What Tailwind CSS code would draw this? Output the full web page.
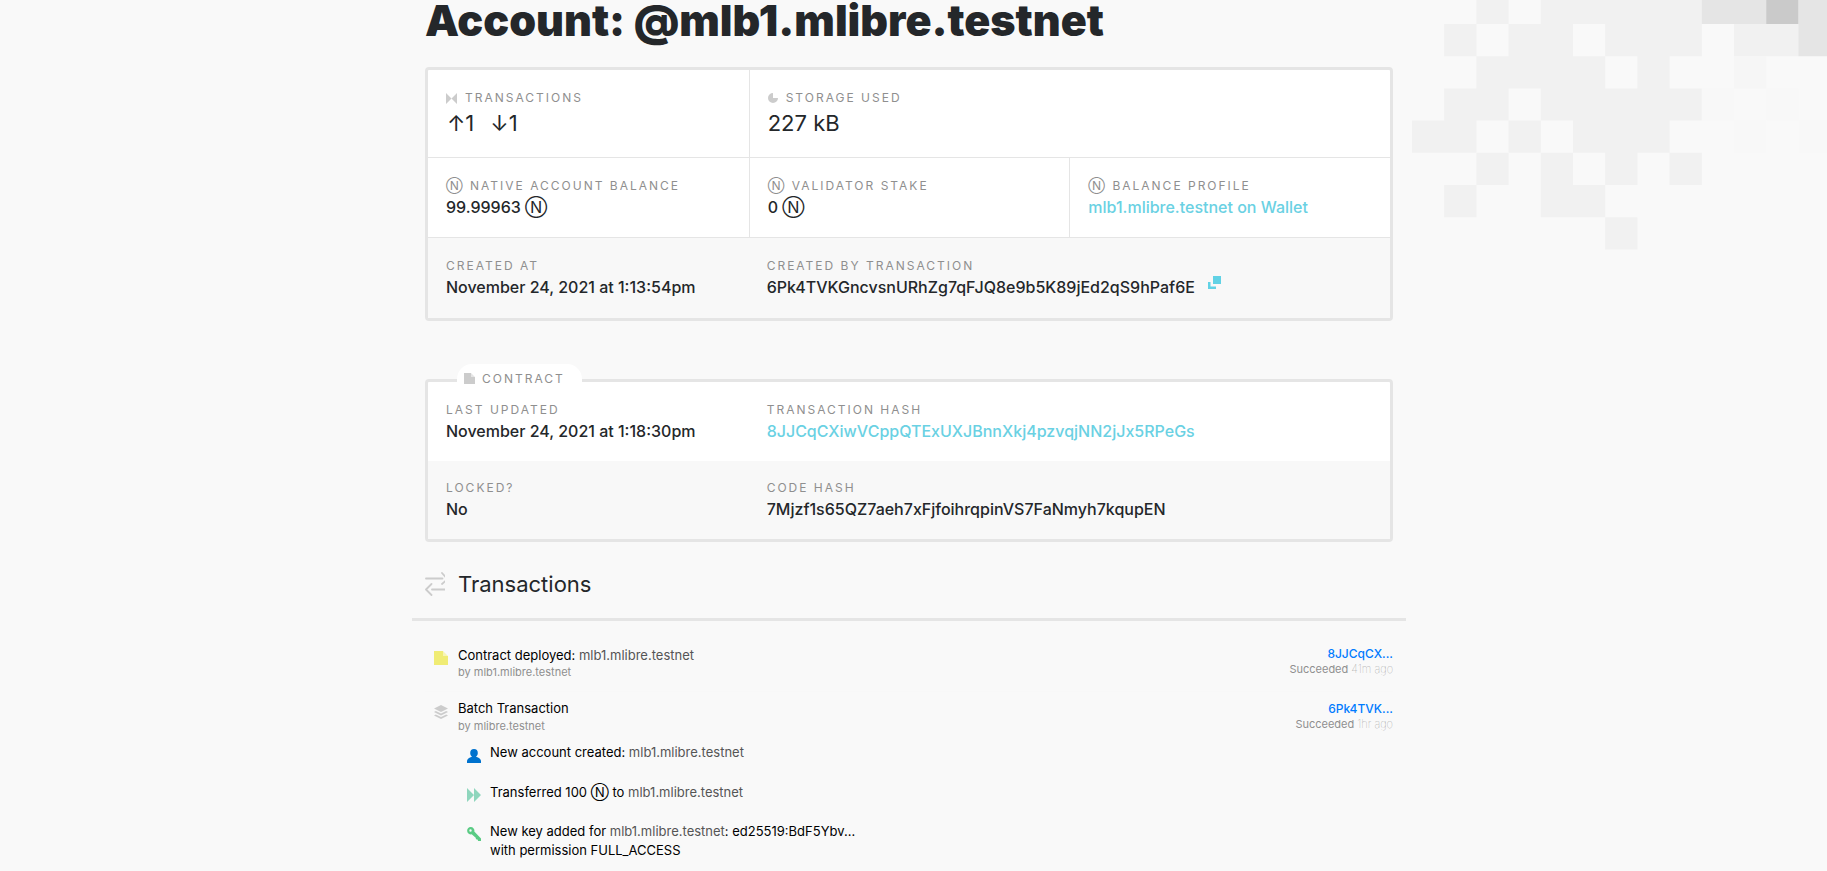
<!DOCTYPE html>
<html lang="en">
<head>
<meta charset="utf-8">
<title>Account: @mlb1.mlibre.testnet</title>
<meta name="viewport" content="width=device-width, initial-scale=1">
<script src="https://cdn.jsdelivr.net/npm/@tailwindcss/browser@4"></script>
</head>
<body class="relative min-h-screen overflow-x-hidden bg-[#f9f9f9] pr-[9px] font-['Inter',sans-serif] text-base font-medium text-[#24272a]">

<!-- Pixel pattern in the page corner -->
<svg class="absolute top-0 right-0 -z-0" width="415" height="250" viewBox="0 0 415 250" aria-hidden="true">
  <g transform="translate(0 -8.2) scale(32.2)">
    <path fill="#f1f1f1" d="M2 0h1v1h-1zM4 0h5v2h-3v-1h-2zM1 1h1v1h-1zM3 1h2v1h1v1h-4v-1h1zM7 2h1v1h-1zM1 3h2v1h-1v1h-2v-1h1zM4 3h5v1h-1v1h-3v-1h-1zM3 4h1v1h-1zM2 5h1v1h-1zM4 5h1v1h1v1h-2zM6 5h1v1h-1zM8 5h1v1h-1zM1 6h1v1h-1zM6 7h1v1h-1zM10 1h2v1h-2z"/>
    <path fill="#e5e5e5" d="M9 0h2v1h-2zM12 0h1v2h-1z"/>
    <path fill="#cacaca" d="M11 0h1v1h-1z"/>
    <path fill="#f6f6f6" d="M10 2h1v1h-1z"/>
    <path fill="#f8f8f8" d="M9 3h1v1h-1zM11 3h1v1h-1zM10 4h1v1h-1zM12 4h1v1h-1z"/>
  </g>
</svg>

<main class="relative mx-auto max-w-[994px] px-[13px]">
  <h1 class="text-[43px] leading-10 font-black">Account: @mlb1.mlibre.testnet</h1>

  <!-- Account summary -->
  <section class="mt-[27px] overflow-hidden rounded-[4px] border-3 border-[#e5e5e5] bg-white" aria-label="Account summary">
    <div class="grid grid-cols-3 border-b border-[#e5e5e5]">
      <div class="px-[18px] pt-[18px] pb-5">
        <div class="flex items-center gap-2 text-[12px] leading-5 font-normal tracking-[2px] text-[#8f8f8f] uppercase">
          <svg width="11" height="11" viewBox="0 0 11 11" fill="#ccc" aria-hidden="true"><path d="M0 0l5.500 5.500L0 11zM11 0v11L5.500 5.500z"/></svg>
          Transactions
        </div>
        <div class="mt-px flex gap-4 pl-px text-[22px] leading-7 font-normal"><span>↑1</span><span>↓1</span></div>
      </div>
      <div class="col-span-2 border-l border-[#e5e5e5] px-[18px] pt-[18px] pb-5">
        <div class="flex items-center gap-2 text-[12px] leading-5 font-normal tracking-[2px] text-[#8f8f8f] uppercase">
          <svg width="10" height="10" viewBox="0 0 10 10" fill="#ccc" aria-hidden="true"><path d="M5 0v5h5a5 5 0 1 1-5-5z"/></svg>
          Storage Used
        </div>
        <div class="mt-px text-[22px] leading-7 font-normal">227 kB</div>
      </div>
    </div>
    <div class="grid grid-cols-3 border-b border-[#e5e5e5]">
      <div class="px-[18px] pt-[18px] pb-[19px]">
        <div class="text-[12px] leading-5 font-normal tracking-[2px] text-[#8f8f8f] uppercase">Ⓝ Native Account Balance</div>
        <div class="leading-[22px]">99.99963 <span class="font-normal">Ⓝ</span></div>
      </div>
      <div class="border-l border-[#e5e5e5] px-[18px] pt-[18px] pb-[19px]">
        <div class="text-[12px] leading-5 font-normal tracking-[2px] text-[#8f8f8f] uppercase">Ⓝ Validator Stake</div>
        <div class="leading-[22px]">0 <span class="font-normal">Ⓝ</span></div>
      </div>
      <div class="border-l border-[#e5e5e5] px-[18px] pt-[18px] pb-[19px]">
        <div class="text-[12px] leading-5 font-normal tracking-[2px] text-[#8f8f8f] uppercase">Ⓝ Balance Profile</div>
        <div class="leading-[22px]"><a href="#wallet" class="text-[#6ad1e3]">mlb1.mlibre.testnet on Wallet</a></div>
      </div>
    </div>
    <div class="grid grid-cols-3 bg-[#f8f8f8]">
      <div class="px-[18px] pt-[18px] pb-5">
        <div class="text-[12px] leading-5 font-normal tracking-[2px] text-[#8f8f8f] uppercase">Created At</div>
        <div class="leading-[22px]">November 24, 2021 at 1:13:54pm</div>
      </div>
      <div class="col-span-2 px-[18px] pt-[18px] pb-5">
        <div class="text-[12px] leading-5 font-normal tracking-[2px] text-[#8f8f8f] uppercase">Created By Transaction</div>
        <div class="flex gap-[13px] leading-[22px]">6Pk4TVKGncvsnURhZg7qFJQ8e9b5K89jEd2qS9hPaf6E
          <a href="#tx-6Pk4TVK" aria-label="Open transaction">
            <svg width="13" height="13" viewBox="0 0 13 13" aria-hidden="true"><path fill="#61d2e5" d="M5 0h8v8h-8zM0 6h2.500v4.500h5.500v2.500h-8z"/></svg>
          </a>
        </div>
      </div>
    </div>
  </section>

  <!-- Contract -->
  <section class="relative mt-[58px] rounded-[4px] border-3 border-[#e5e5e5] bg-white" aria-labelledby="contract-title">
    <h2 id="contract-title" class="absolute -top-[18px] left-[29px] flex h-[25px] w-[125px] items-center gap-[7px] rounded-t-[15px] bg-white pt-1 pl-[7px] text-[12px] leading-5 font-normal tracking-[2px] text-[#8f8f8f] uppercase">
      <svg width="11" height="11" viewBox="0 0 11 11" aria-hidden="true"><path fill="#ccc" d="M0 0h7v4h4v7h-11z"/><path fill="#e5e5e5" d="M7 0l4 4h-4z"/></svg>
      Contract
    </h2>
    <div class="grid grid-cols-3">
      <div class="px-[18px] pt-[18px] pb-[19px]">
        <div class="text-[12px] leading-5 font-normal tracking-[2px] text-[#8f8f8f] uppercase">Last Updated</div>
        <div class="leading-[22px]">November 24, 2021 at 1:18:30pm</div>
      </div>
      <div class="col-span-2 px-[18px] pt-[18px] pb-[19px]">
        <div class="text-[12px] leading-5 font-normal tracking-[2px] text-[#8f8f8f] uppercase">Transaction Hash</div>
        <div class="leading-[22px]"><a href="#tx-8JJCqCX" class="text-[#6ad1e3]">8JJCqCXiwVCppQTExUXJBnnXkj4pzvqjNN2jJx5RPeGs</a></div>
      </div>
    </div>
    <div class="grid grid-cols-3 bg-[#f8f8f8]">
      <div class="px-[18px] pt-[17px] pb-[19px]">
        <div class="text-[12px] leading-5 font-normal tracking-[2px] text-[#8f8f8f] uppercase">Locked?</div>
        <div class="leading-[22px]">No</div>
      </div>
      <div class="col-span-2 px-[18px] pt-[17px] pb-[19px]">
        <div class="text-[12px] leading-5 font-normal tracking-[2px] text-[#8f8f8f] uppercase">Code Hash</div>
        <div class="leading-[22px]">7Mjzf1s65QZ7aeh7xFjfoihrqpinVS7FaNmyh7kqupEN</div>
      </div>
    </div>
  </section>

  <!-- Transactions -->
  <section aria-labelledby="tx-title">
    <div class="-mx-[13px] flex items-center gap-[13px] border-b-3 border-[#e5e5e5] px-[13px] pt-7 pb-5">
      <svg width="20" height="24" viewBox="0 0 20 24" fill="none" stroke="#ccc" stroke-width="1.800" stroke-linecap="round" stroke-linejoin="round" aria-hidden="true"><path d="M1 6.500h16.500M17 1l4 4.500M17 12l4-3.500M20 17.500H7M6.500 12L1 17.500 6.500 23"/></svg>
      <h2 id="tx-title" class="text-[22px] leading-7 font-normal">Transactions</h2>
    </div>

    <ul class="mt-[23px] text-[13px] font-normal">
      <li class="flex h-[47px] justify-between">
        <div class="flex gap-[10px] pl-[9px]">
          <svg class="mt-[7px]" width="14" height="14" viewBox="0 0 14 14" aria-hidden="true"><path fill="#f0ec74" d="M0 0h9v5h5v9h-14z"/><path fill="#f7f5b5" d="M9 0l5 5h-5z"/></svg>
          <div>
            <div class="pt-0.5 leading-[19px] text-black">Contract deployed: <a href="#account" class="text-[#555]">mlb1.mlibre.testnet</a></div>
            <div class="text-[11px] leading-[15px] text-[#8f8f8f]">by mlb1.mlibre.testnet</div>
          </div>
        </div>
        <div class="text-right">
          <a href="#tx-8JJCqCX" class="block text-[12px] leading-[19px] font-medium text-[#007bff]">8JJCqCX...</a>
          <div class="text-[11px] leading-[13px] text-[#8f8f8f]">Succeeded <span class="font-thin">41m ago</span></div>
        </div>
      </li>
      <li class="border-t border-[#f8f8f8] pt-[7px]">
        <div class="flex h-11 justify-between">
          <div class="flex gap-[10px] pl-[9px]">
            <svg class="mt-[6px]" width="14" height="14" viewBox="0 0 14 14" fill="#ccc" aria-hidden="true"><path d="M7 0l7 3.500-7 3.500-7-3.500zM1.800 6L7 8.600 12.200 6 14 7 7 10.500 0 7zM1.800 9.500L7 12.100l5.200-2.600 1.800.9L7 14 0 10.400z"/></svg>
            <div>
              <div class="leading-[19px] text-black">Batch Transaction</div>
              <div class="text-[11px] leading-[16px] text-[#8f8f8f]">by mlibre.testnet</div>
            </div>
          </div>
          <div class="text-right">
            <a href="#tx-6Pk4TVK" class="block text-[12px] leading-[19px] font-medium text-[#007bff]">6Pk4TVK...</a>
            <div class="text-[11px] leading-[13px] text-[#8f8f8f]">Succeeded <span class="font-thin">1hr ago</span></div>
          </div>
        </div>
        <ul class="pl-[42px] leading-[19px] text-black">
          <li class="flex h-10 gap-[9px]">
            <svg class="mt-[6px]" width="14" height="14" viewBox="0 0 14 14" fill="#0072ce" aria-hidden="true"><path d="M7 0a3.800 4 0 0 1 3.800 4c0 1.600-.8 3-1.800 3.700C12 8.500 14 10 14 12v2H0v-2c0-2 2-3.500 5-4.300C4 7 3.200 5.600 3.200 4A3.800 4 0 0 1 7 0z"/></svg>
            <div>New account created: <a href="#account" class="text-[#555]">mlb1.mlibre.testnet</a></div>
          </li>
          <li class="flex h-[39px] gap-[9px]">
            <svg class="mt-[5px]" width="14" height="14" viewBox="0 0 14 14" fill="#8fd6bd" aria-hidden="true"><path d="M0 0l7 7-7 7zM7 0l7 7-7 7z"/></svg>
            <div>Transferred 100 Ⓝ to <a href="#account" class="text-[#555]">mlb1.mlibre.testnet</a></div>
          </li>
          <li class="flex gap-[9px]">
            <svg class="mt-[5px]" width="14" height="14" viewBox="0 0 14 14" aria-hidden="true"><path fill="#5acb84" fill-rule="evenodd" d="M3.700 0a3.700 3.700 0 0 1 3.600 4.600L14 11.500V14h-2.800l-.7-1.500-1.500-.3-.3-1.500-4-3.400A3.700 3.700 0 1 1 3.700 0zM3.500 2.300a1.200 1.200 0 1 0 0 2.400 1.200 1.200 0 0 0 0-2.400z"/></svg>
            <div>New key added for <a href="#account" class="text-[#555]">mlb1.mlibre.testnet</a>: ed25519:BdF5Ybv...<br>with permission FULL_ACCESS</div>
          </li>
        </ul>
      </li>
    </ul>
  </section>
</main>
</body>
</html>
